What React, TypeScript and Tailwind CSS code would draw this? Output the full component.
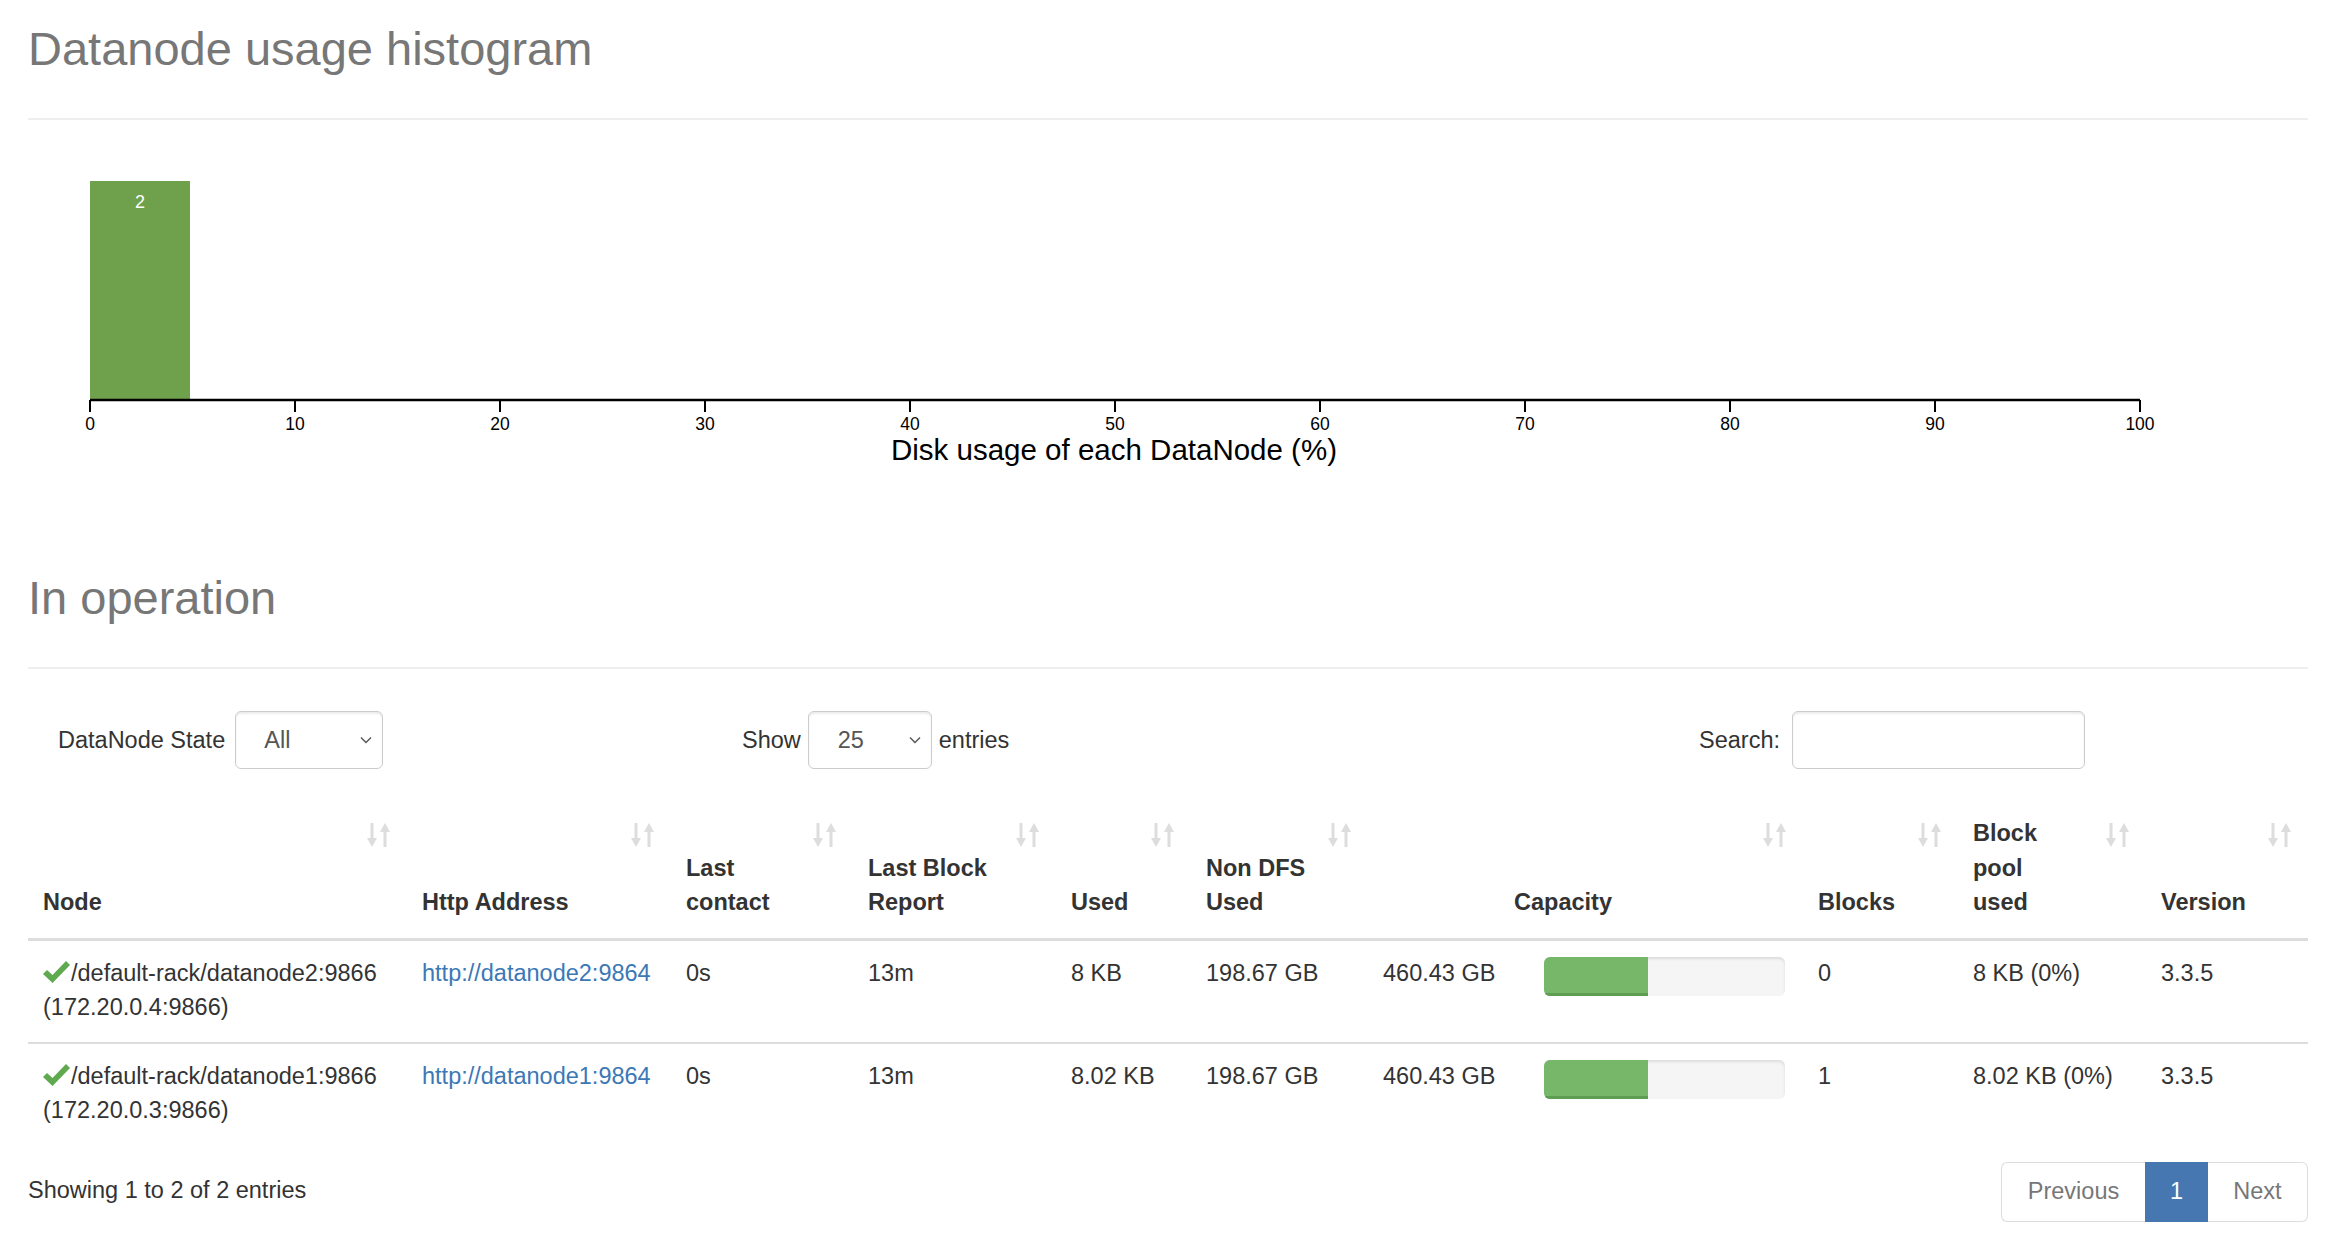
import React from "react";

const rows = [
  {
    node: "/default-rack/datanode2:9866",
    ip: "(172.20.0.4:9866)",
    http: "http://datanode2:9864",
    lastContact: "0s",
    lastBlock: "13m",
    used: "8 KB",
    nonDfs: "198.67 GB",
    capacity: "460.43 GB",
    pct: 43,
    blocks: "0",
    pool: "8 KB (0%)",
    version: "3.3.5",
  },
  {
    node: "/default-rack/datanode1:9866",
    ip: "(172.20.0.3:9866)",
    http: "http://datanode1:9864",
    lastContact: "0s",
    lastBlock: "13m",
    used: "8.02 KB",
    nonDfs: "198.67 GB",
    capacity: "460.43 GB",
    pct: 43,
    blocks: "1",
    pool: "8.02 KB (0%)",
    version: "3.3.5",
  },
];

function PageHeader({ title }: { title: string }) {
  return (
    <div className="h-[120px] border-b-2 border-[#eee] pt-[21px]">
      <h1 className="text-[47px] font-normal leading-[56px] text-[#777]">{title}</h1>
    </div>
  );
}

function Histogram() {
  const ticks = [0, 10, 20, 30, 40, 50, 60, 70, 80, 90, 100];
  const font = "Liberation Sans, Arial, sans-serif";
  return (
    <svg width={2280} height={348} className="block" fontFamily={font}>
      <rect x={62} y={61} width={100} height={219} fill="#6fa14c" />
      <text x={112} y={88} fill="#fff" fontSize={18} textAnchor="middle">
        2
      </text>
      <line x1={62} y1={280} x2={2112} y2={280} stroke="#000" strokeWidth={2.5} />
      {ticks.map((t, i) => (
        <g key={t}>
          <line x1={62 + i * 205} y1={280} x2={62 + i * 205} y2={292} stroke="#000" strokeWidth={2} />
          <text x={62 + i * 205} y={310} fontSize={17.5} textAnchor="middle" fill="#000">
            {t}
          </text>
        </g>
      ))}
      <text x={1086} y={340} fontSize={29.5} textAnchor="middle" fill="#000">
        Disk usage of each DataNode (%)
      </text>
    </svg>
  );
}

function Chevron() {
  return (
    <svg width="12" height="8" viewBox="0 0 12 8" className="absolute right-[10px] top-1/2 -translate-y-1/2">
      <path d="M1 1.5 L6 6.5 L11 1.5" fill="none" stroke="#555" strokeWidth="1.4" />
    </svg>
  );
}

function FakeSelect({ value, className }: { value: string; className: string }) {
  return (
    <div
      className={`relative flex h-[58px] items-center rounded-[6px] border-[1.5px] border-[#ccc] text-[#555] shadow-[inset_0_2px_2px_rgba(0,0,0,0.08)] ${className}`}
    >
      {value}
      <Chevron />
    </div>
  );
}

function SortIcon() {
  return (
    <svg width="24" height="24" viewBox="0 0 24 24" className="absolute right-[16px] top-[20px]">
      <rect x="3.5" y="0" width="3" height="16" fill="#ddd" />
      <polygon points="0,15 10,15 5,24" fill="#ddd" />
      <polygon points="13,9 23,9 18,0" fill="#ddd" />
      <rect x="16.5" y="8" width="3" height="16" fill="#ddd" />
    </svg>
  );
}

function Check() {
  return (
    <svg width="27" height="22" viewBox="0 0 27 22" className="mr-[1px] inline-block align-[-2px]">
      <polygon points="0,13 4,9 9.5,14 23,0 27,4 9.5,22" fill="#5fa94f" />
    </svg>
  );
}

function Th({ children, className = "" }: { children: React.ReactNode; className?: string }) {
  return (
    <th className={`relative whitespace-nowrap px-[15px] pb-[18px] pt-[13px] text-left align-bottom font-bold ${className}`}>
      {children}
      <SortIcon />
    </th>
  );
}

const td = "whitespace-nowrap px-[15px] pb-[17px] pt-[15px] align-top";

export default function App() {
  return (
    <div className="min-h-screen bg-white pl-[28px] pr-[34px] font-['Liberation_Sans',Arial,sans-serif] text-[23.5px] leading-[34.5px] text-[#333]">
      <PageHeader title="Datanode usage histogram" />
      <Histogram />

      <div className="mt-[81px]">
        <PageHeader title="In operation" />
      </div>

      <div className="mt-[42px] flex h-[58px] items-center pl-[30px] pr-[223px]">
        <div className="flex w-[684px] items-center">
          <span>DataNode State</span>
          <FakeSelect value="All" className="ml-[10px] w-[148px] pl-[28px]" />
        </div>
        <span>Show</span>
        <FakeSelect value="25" className="ml-[7px] w-[124px] pl-[29px]" />
        <span className="ml-[7px]">entries</span>
        <div className="ml-auto flex items-center">
          <span>Search:</span>
          <div className="ml-[12px] h-[58px] w-[293px] rounded-[6px] border-[1.5px] border-[#ccc] shadow-[inset_0_2px_2px_rgba(0,0,0,0.08)]" />
        </div>
      </div>

      <table className="mt-[34px] w-full table-fixed border-collapse">
        <colgroup>
          <col className="w-[379px]" />
          <col className="w-[264px]" />
          <col className="w-[182px]" />
          <col className="w-[203px]" />
          <col className="w-[135px]" />
          <col className="w-[177px]" />
          <col className="w-[435px]" />
          <col className="w-[155px]" />
          <col className="w-[188px]" />
          <col className="w-[162px]" />
        </colgroup>
        <thead>
          <tr className="border-b-[3px] border-[#ddd]">
            <Th>Node</Th>
            <Th>Http Address</Th>
            <Th>
              Last
              <br />
              contact
            </Th>
            <Th>
              Last Block
              <br />
              Report
            </Th>
            <Th>Used</Th>
            <Th>
              Non DFS
              <br />
              Used
            </Th>
            <Th className="pl-[146px]">Capacity</Th>
            <Th>Blocks</Th>
            <Th>
              Block
              <br />
              pool
              <br />
              used
            </Th>
            <Th>Version</Th>
          </tr>
        </thead>
        <tbody>
          {rows.map((r, i) => (
            <tr key={r.node} className={i > 0 ? "border-t-2 border-[#ddd]" : ""}>
              <td className={td}>
                <Check />
                {r.node}
                <br />
                {r.ip}
              </td>
              <td className={td}>
                <a className="text-[#3c78b5]" href="#">
                  {r.http}
                </a>
              </td>
              <td className={td}>{r.lastContact}</td>
              <td className={td}>{r.lastBlock}</td>
              <td className={td}>{r.used}</td>
              <td className={td}>{r.nonDfs}</td>
              <td className={td}>
                <div className="flex items-start">
                  <span className="w-[161px] shrink-0">{r.capacity}</span>
                  <div className="mt-[1px] h-[39px] w-[241px] overflow-hidden rounded-[6px] bg-[#f5f5f5] shadow-[inset_0_2px_3px_rgba(0,0,0,0.1)]">
                    <div
                      className="h-full border-b-[3px] border-[#5f9d53] bg-[#77b76a]"
                      style={{ width: `${r.pct}%` }}
                    />
                  </div>
                </div>
              </td>
              <td className={td}>{r.blocks}</td>
              <td className={td}>{r.pool}</td>
              <td className={td}>{r.version}</td>
            </tr>
          ))}
        </tbody>
      </table>

      <div className="mt-[17px] flex items-center justify-between">
        <span className="-mt-[3px]">Showing 1 to 2 of 2 entries</span>
        <div className="flex h-[60px]">
          <span className="flex w-[144px] items-center justify-center rounded-l-[6px] border-[1.5px] border-r-0 border-[#ddd] text-[#777]">
            Previous
          </span>
          <span className="flex w-[63px] items-center justify-center bg-[#4677b0] text-white">1</span>
          <span className="flex w-[100px] items-center justify-center rounded-r-[6px] border-[1.5px] border-l-0 border-[#ddd] text-[#777]">
            Next
          </span>
        </div>
      </div>
    </div>
  );
}
